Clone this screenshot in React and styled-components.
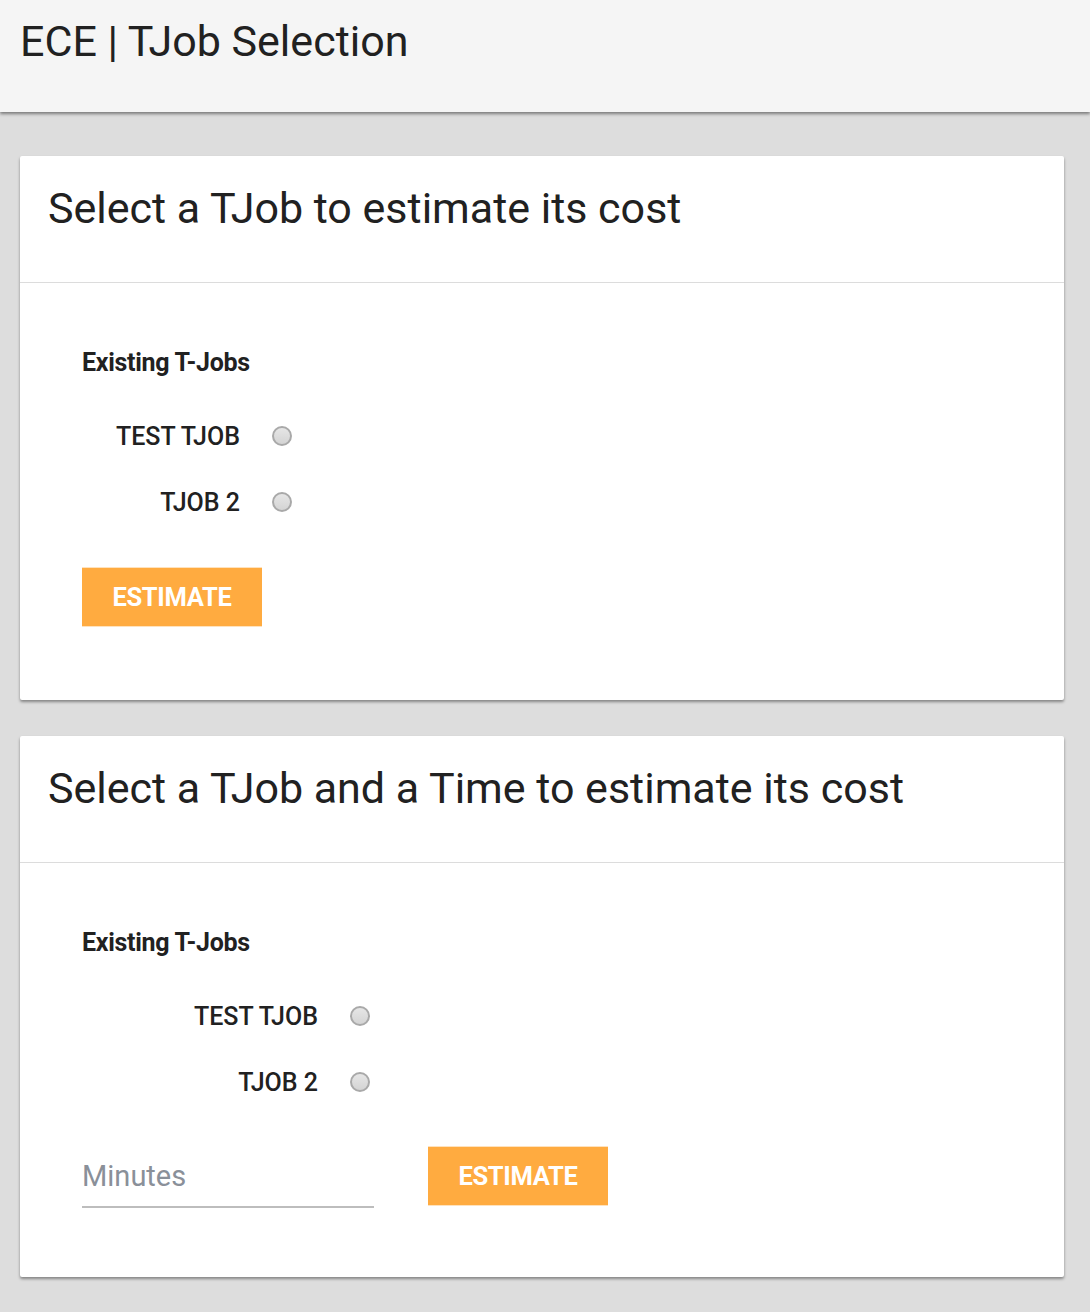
import styled, { createGlobalStyle } from 'styled-components'

const GlobalStyle = createGlobalStyle`
    html, body {
        margin: 0;
        padding: 0;
        background: #dddddd;
        font-family: Roboto, "Liberation Sans", sans-serif;
        color: #212121;
    }
`

const Header = styled.header`
    height: 112px;
    background: #f5f5f5;
    box-shadow: 0 2px 3px rgba(0, 0, 0, .45);
    padding: 16px 20px 0;
    box-sizing: border-box;
    position: relative;

    h1 {
        margin: 0;
        font-weight: 400;
        font-size: 43px;
        line-height: 50px;
        color: #212121;
    }
`

const Main = styled.main`
    padding: 44px 26px 34px 20px;
    display: flex;
    flex-direction: column;
    gap: 36px;
`

const Card = styled.section`
    background: #fff;
    border-radius: 2px;
    box-shadow: 0 2px 3px rgba(0, 0, 0, .4);
`

const CardTitle = styled.div`
    padding: 26px 28px 0;
    height: 127px;
    box-sizing: border-box;
    border-bottom: 1px solid #dcdcdc;

    h2 {
        margin: 0;
        font-weight: 400;
        font-size: 43px;
        line-height: 52px;
    }
`

const CardBody = styled.div`
    padding: 64px 62px ${p => p.$bottom}px;
`

const GroupLabel = styled.h3`
    margin: 0 0 39px;
    font-size: 25px;
    font-weight: 700;
    line-height: 32px;
    letter-spacing: -.3px;
`

const RadioList = styled.div`
    display: flex;
    flex-direction: column;
    gap: 30px;
`

const RadioRow = styled.label`
    display: flex;
    align-items: center;
    height: 36px;

    span {
        width: ${p => p.$labelWidth}px;
        text-align: right;
        font-size: 25px;
        font-weight: 500;
    }
`

const Radio = styled.input.attrs({ type: 'radio' })`
    appearance: none;
    margin: 0 0 0 32px;
    width: 20px;
    height: 20px;
    border-radius: 50%;
    border: 2px solid #a9a9a9;
    background: linear-gradient(#e6e6e6, #d4d4d4);
    box-sizing: border-box;
`

const Actions = styled.div`
    display: flex;
    align-items: flex-end;
    gap: 54px;
    margin-top: ${p => p.$top}px;
`

const Button = styled.button`
    width: 180px;
    height: 60px;
    border: none;
    border-top: 1px solid #ffe2bd;
    border-bottom: 1px solid #ffe2bd;
    background: #ffab40;
    color: #fff;
    font-family: inherit;
    font-size: 25.5px;
    font-weight: 700;
    letter-spacing: -.3px;
    margin-bottom: ${p => p.$bottom || 0}px;
`

const MinutesInput = styled.input`
    width: 292px;
    height: 60px;
    border: none;
    border-bottom: 2px solid #bdbdbd;
    font-family: inherit;
    font-size: 29px;
    padding: 0;
    outline: none;
    background: transparent;

    &::placeholder {
        color: #8a9099;
    }
`

const jobs = ['TEST TJOB', 'TJOB 2']

function JobList({ labelWidth }) {
    return (
        <>
            <GroupLabel>Existing T-Jobs</GroupLabel>
            <RadioList>
                {jobs.map(job => (
                    <RadioRow key={job} $labelWidth={labelWidth}>
                        <span>{job}</span>
                        <Radio name={job} />
                    </RadioRow>
                ))}
            </RadioList>
        </>
    )
}

export default function App() {
    return (
        <>
            <GlobalStyle />
            <Header>
                <h1>ECE | TJob Selection</h1>
            </Header>
            <Main>
                <Card>
                    <CardTitle>
                        <h2>Select a TJob to estimate its cost</h2>
                    </CardTitle>
                    <CardBody $bottom={73}>
                        <JobList labelWidth={158} />
                        <Actions $top={47}>
                            <Button>ESTIMATE</Button>
                        </Actions>
                    </CardBody>
                </Card>
                <Card>
                    <CardTitle>
                        <h2>Select a TJob and a Time to estimate its cost</h2>
                    </CardTitle>
                    <CardBody $bottom={69}>
                        <JobList labelWidth={236} />
                        <Actions $top={46}>
                            <MinutesInput placeholder="Minutes" />
                            <Button $bottom={2}>ESTIMATE</Button>
                        </Actions>
                    </CardBody>
                </Card>
            </Main>
        </>
    )
}
